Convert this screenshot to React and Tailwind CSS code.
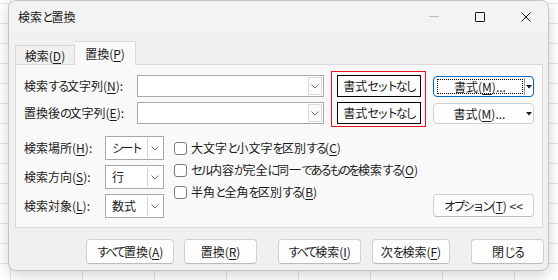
import React from "react";

// kana glyphs are narrower in the original UI font, so tighten them
const KANA = /([\u3041-\u3096\u30A1-\u30FA\u30FC]+)/;
const J = ({ t }) =>
  t.split(KANA).map((s, i) =>
    i % 2 === 1 ? (
      <span key={i} className="tracking-[-2.5px]">
        {s}
      </span>
    ) : (
      s
    ),
  );

const U = ({ children }) => (
  <span className="underline decoration-1 underline-offset-[2px]">{children}</span>
);

const Chevron = () => (
  <svg width="8" height="5" viewBox="0 0 8 5">
    <path d="M0.5 0.5 L4 4 L7.5 0.5" fill="none" stroke="#707070" strokeWidth="1" />
  </svg>
);

const Tri = () => (
  <svg width="6" height="4" viewBox="0 0 6 4">
    <path d="M0 0 H6 L3 3.5 Z" fill="#1a1a1a" />
  </svg>
);

const Combo = () => (
  <div className="flex h-[22px] w-[187px] border border-[#a8a8a8] bg-white">
    <div className="flex-1" />
    <div className="my-[1px] mr-[1px] flex w-[14px] items-center justify-center border border-[#dcdcdc] bg-[#fbfbfb]">
      <Chevron />
    </div>
  </div>
);

const Select = ({ value }) => (
  <div className="flex h-[24px] w-[59px] items-center border border-[#a8a8a8] bg-white">
    <span className="flex-1 whitespace-nowrap pl-[6px]">
      <J t={value} />
    </span>
    <div className="my-[1px] mr-[1px] flex h-[20px] w-[15px] items-center justify-center border-l border-[#d4d4d4]">
      <Chevron />
    </div>
  </div>
);

const Check = ({ t, k }) => (
  <div className="flex h-[22px] items-center whitespace-nowrap">
    <div className="h-[13px] w-[13px] rounded-[3px] border border-[#7a7a7a] bg-white" />
    <span className="ml-[4px]">
      <J t={t} />(<U>{k}</U>)
    </span>
  </div>
);

const Btn = ({ w, children }) => (
  <div
    className={`flex h-[25px] items-center justify-center whitespace-nowrap rounded-[4px] border border-[#d0d0d0] border-b-[#bcbcbc] bg-[#fdfdfd] ${w}`}
  >
    {children}
  </div>
);

const Label = ({ w, t, k }) => (
  <span className={`whitespace-nowrap ${w}`}>
    <J t={t} />(<U>{k}</U>):
  </span>
);

export default function App() {
  return (
    <div className="h-[280px] w-[558px] overflow-hidden bg-white bg-[linear-gradient(to_right,#e2e2e2_1px,transparent_1px),linear-gradient(to_bottom,#e2e2e2_1px,transparent_1px)] bg-[size:72px_20px] bg-[position:10px_3px] font-['Noto_Sans_CJK_JP','Noto_Sans',sans-serif] text-[12px] leading-none text-[#1a1a1a]">
      <div className="ml-[8px] h-[271px] w-[541px] overflow-hidden rounded-[8px] border border-[#c4c4c4] bg-[#f0f0f0] shadow-[0_4px_14px_rgba(0,0,0,0.18)]">
        {/* title bar */}
        <div className="flex h-[31px] items-center bg-[#f3f3f3]">
          <span className="pl-[9px] pt-[1px]">
            <J t="検索と置換" />
          </span>
          <div className="ml-auto flex h-full">
            <div className="flex w-[46px] items-center justify-center">
              <div className="h-px w-[10px] bg-[#bdbdbd]" />
            </div>
            <div className="flex w-[46px] items-center justify-center">
              <div className="h-[10px] w-[10px] rounded-[1px] border border-[#1a1a1a]" />
            </div>
            <div className="flex w-[45px] items-center justify-center">
              <svg width="10" height="10" viewBox="0 0 10 10">
                <path d="M0.5 0.5 L9.5 9.5 M9.5 0.5 L0.5 9.5" stroke="#1a1a1a" strokeWidth="1" />
              </svg>
            </div>
          </div>
        </div>

        {/* tabs */}
        <div className="mt-[9px] flex h-[23px] items-end pl-[6px]">
          <div className="flex h-[19px] w-[60px] items-center justify-center border border-b-0 border-[#d9d9d9] bg-[#f0f0f0] pt-[1px]">
            検索(<U>D</U>)
          </div>
          <div className="relative z-10 -mb-px flex h-[24px] w-[61px] items-center justify-center border border-b-0 border-l-0 border-[#d9d9d9] bg-[#f9f9f9]">
            置換(<U>P</U>)
          </div>
        </div>

        {/* panel */}
        <div className="ml-[6px] h-[164px] w-[528px] border border-[#d9d9d9] bg-[#f9f9f9] pl-[8px] pt-[6px]">
          <div className="flex items-start">
            <div className="mt-[4px] flex flex-col gap-[5px]">
              <div className="flex h-[22px] items-center">
                <Label w="w-[113px]" t="検索する文字列" k="N" />
                <Combo />
              </div>
              <div className="flex h-[22px] items-center">
                <Label w="w-[113px]" t="置換後の文字列" k="E" />
                <Combo />
              </div>
            </div>

            <div className="ml-[7px] flex h-[56px] w-[95px] flex-col gap-[5px] border border-[#e81123] pl-[5px] pt-[3px]">
              <div className="flex h-[22px] w-[84px] items-center justify-center whitespace-nowrap border border-black bg-[#fdfdfd]">
                <J t="書式セットなし" />
              </div>
              <div className="flex h-[22px] w-[84px] items-center justify-center whitespace-nowrap border border-black bg-[#fdfdfd]">
                <J t="書式セットなし" />
              </div>
            </div>

            <div className="ml-[7px] mt-[5px] flex w-[101px] flex-col gap-[6px]">
              <div className="flex h-[21px] items-center rounded-[4px] border border-[#0067c0] bg-[#fdfdfd]">
                <div className="ml-[3px] flex h-[15px] w-[86px] items-center justify-center whitespace-nowrap border border-dotted border-black">
                  書式(<U>M</U>)...
                </div>
                <div className="ml-[1px] h-[17px] w-px bg-[#9a9a9a]" />
                <div className="flex flex-1 justify-center">
                  <Tri />
                </div>
              </div>
              <div className="flex h-[21px] items-center rounded-[4px] border border-[#d0d0d0] bg-[#fdfdfd]">
                <div className="flex w-[91px] justify-center whitespace-nowrap">
                  書式(<U>M</U>)...
                </div>
                <div className="flex flex-1 justify-center">
                  <Tri />
                </div>
              </div>
            </div>
          </div>

          <div className="mt-[9px] flex items-start">
            <div className="flex flex-col gap-[5px]">
              <div className="flex items-center">
                <Label w="w-[81px]" t="検索場所" k="H" />
                <Select value="シート" />
              </div>
              <div className="flex items-center">
                <Label w="w-[81px]" t="検索方向" k="S" />
                <Select value="行" />
              </div>
              <div className="flex items-center">
                <Label w="w-[81px]" t="検索対象" k="L" />
                <Select value="数式" />
              </div>
            </div>

            <div className="ml-[10px] mt-[1px] flex flex-col">
              <Check t="大文字と小文字を区別する" k="C" />
              <Check t="セル内容が完全に同一であるものを検索する" k="O" />
              <Check t="半角と全角を区別する" k="B" />
            </div>

            <div className="mb-[1px] ml-auto mr-[8px] flex h-[23px] w-[101px] shrink-0 items-center justify-center self-end whitespace-nowrap rounded-[4px] border border-[#d0d0d0] border-b-[#bcbcbc] bg-[#fdfdfd]">
              <J t="オプション" />(<U>T</U>) &lt;&lt;
            </div>
          </div>
        </div>

        {/* bottom buttons */}
        <div className="mt-[11px] flex pl-[77px]">
          <Btn w="w-[88px]">
            <J t="すべて置換" />(<U>A</U>)
          </Btn>
          <div className="ml-[10px]">
            <Btn w="w-[73px]">
              置換(<U>R</U>)
            </Btn>
          </div>
          <div className="ml-[21px]">
            <Btn w="w-[83px]">
              <J t="すべて検索" />(<U>I</U>)
            </Btn>
          </div>
          <div className="ml-[11px]">
            <Btn w="w-[78px]">
              <J t="次を検索" />(<U>F</U>)
            </Btn>
          </div>
          <div className="ml-[21px]">
            <Btn w="w-[73px]">
              <J t="閉じる" />
            </Btn>
          </div>
        </div>
      </div>
    </div>
  );
}
